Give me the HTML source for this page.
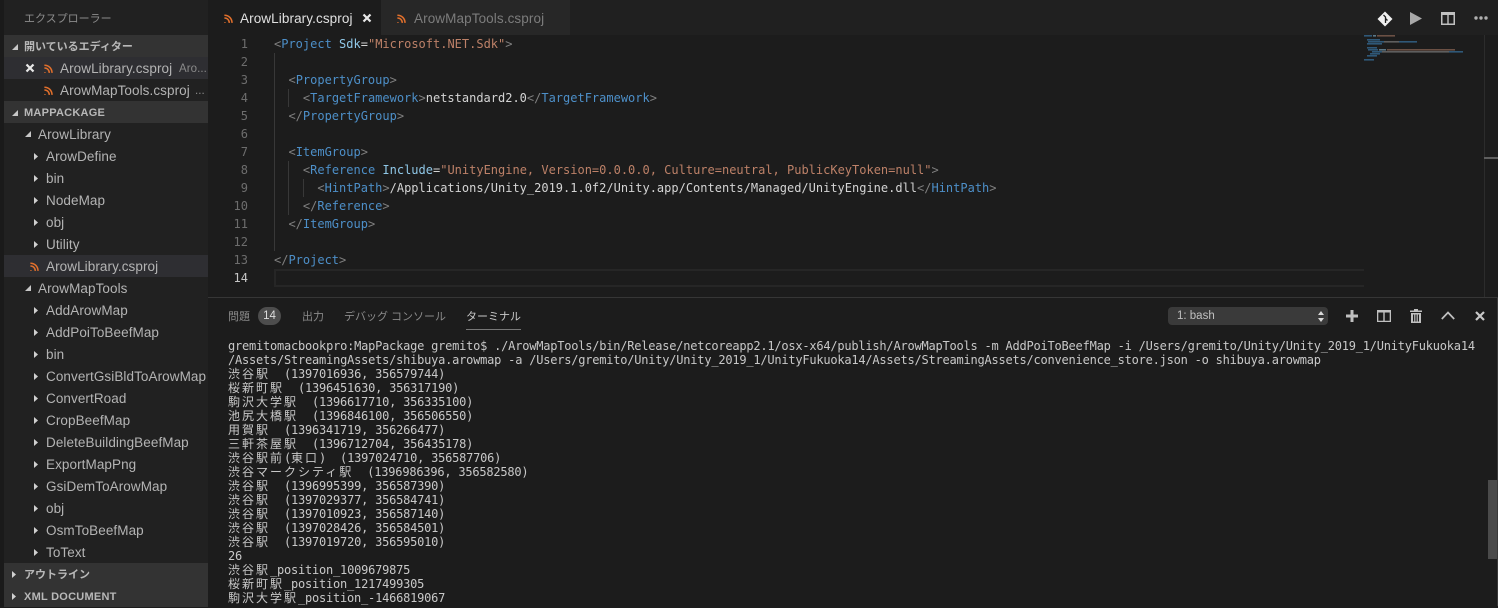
<!DOCTYPE html>
<html><head><meta charset="utf-8"><style>
html,body{margin:0;padding:0;background:#1c1c1c;width:1498px;height:606px;overflow:hidden}
*{box-sizing:border-box}
.a{position:absolute}
#side{left:0;top:0;width:208px;height:606px;background:#212121;font-family:"Liberation Sans","Noto Sans CJK JP",sans-serif;color:#bbb}
#side .strip{left:0;top:0;width:4px;height:606px;background:#1a1a1a}
.r{position:absolute;left:4px;width:204px;height:22px;line-height:22px;font-size:13.5px;letter-spacing:.08px;white-space:nowrap;color:#b4b4b4}
.r span{position:absolute;top:1px}
.h{background:#333;font-size:11px;font-weight:bold;letter-spacing:0;color:#b8b8b8}
.h.l{letter-spacing:.25px}
.r svg{position:absolute}
.ln{position:absolute;left:208px;width:40px;text-align:right;height:18px;line-height:18px;font:12px/18px "DejaVu Sans Mono",monospace;color:#6d6d6d}
.c{position:absolute;left:274px;height:18px;font:12px/18px "DejaVu Sans Mono",monospace;white-space:pre;color:#d4d4d4}
.p{color:#808080}.t{color:#4d8fc8}.k{color:#90c8e8}.s{color:#bd8168}
.g{position:absolute;width:1px;background:#383838}
#term{left:228px;top:339px;font:12px/14px "DejaVu Sans Mono","Noto Sans CJK JP",monospace;letter-spacing:-.22px;color:#c8c8c8;white-space:pre}
#term i{font-style:normal;font-family:"Noto Sans CJK JP",sans-serif;letter-spacing:2px}
.pt{position:absolute;top:308px;font:11px/18px "Liberation Sans","Noto Sans CJK JP",sans-serif;color:#8a8a8a;white-space:nowrap}
.tab{position:absolute;top:0;height:35px;line-height:37px;font-family:"Liberation Sans",sans-serif;font-size:13.5px;letter-spacing:.1px;white-space:nowrap}
</style></head><body>
<svg width="0" height="0" style="position:absolute"><defs>
<g id="rss"><path d="M1 9.2a1.4 1.4 0 1 0 .01 0z" fill="#e2702c"/><path d="M0 4.6c3.7 0 6.4 2.7 6.4 6.4M0 1c5.8 0 10 4.200 10 10" transform="translate(0 -1) scale(.85) translate(.5 1.800)" fill="none" stroke="#e2702c" stroke-width="2"/></g>
<path id="dn" d="M6 0V6H0z" fill="#c8c8c8"/>
<path id="rt" d="M0 0L4 3.500L0 7z" fill="#d0d0d0"/>
</defs></svg>

<div class="a" id="side">
<div class="a strip"></div>
<div class="a" style="left:24px;top:10px;font-size:11px;line-height:18px;color:#8c8c8c">エクスプローラー</div>

<div class="r h" style="top:35px"><svg style="left:8px;top:9px" width="6" height="6"><use href="#dn"/></svg><span style="left:20px">開いているエディター</span></div>
<div class="r" style="top:57px;background:#2e2e32"><svg style="left:21px;top:6px" width="10" height="10" viewBox="0 0 10 10"><path d="M1.500 1.500L8.500 8.500M8.500 1.500L1.500 8.500" stroke="#e8e8e8" stroke-width="2.200"/></svg><svg style="left:40px;top:7px" width="9" height="9" viewBox="0 0 10 10"><use href="#rss"/></svg><span style="left:56px">ArowLibrary.csproj</span><span style="left:175px;font-size:11.5px;color:#8a8a8a">Aro...</span></div>
<div class="r" style="top:79px"><svg style="left:40px;top:7px" width="9" height="9" viewBox="0 0 10 10"><use href="#rss"/></svg><span style="left:56px">ArowMapTools.csproj</span><span style="left:191px;font-size:11.5px;color:#8a8a8a">...</span></div>
<div class="r h l" style="top:101px"><svg style="left:8px;top:9px" width="6" height="6"><use href="#dn"/></svg><span style="left:20px">MAPPACKAGE</span></div>
<div class="r" style="top:123px"><svg style="left:21px;top:8px" width="6" height="6"><use href="#dn"/></svg><span style="left:34px">ArowLibrary</span></div>
<div class="r" style="top:145px"><svg style="left:30px;top:8px" width="4" height="7"><use href="#rt"/></svg><span style="left:42px">ArowDefine</span></div>
<div class="r" style="top:167px"><svg style="left:30px;top:8px" width="4" height="7"><use href="#rt"/></svg><span style="left:42px">bin</span></div>
<div class="r" style="top:189px"><svg style="left:30px;top:8px" width="4" height="7"><use href="#rt"/></svg><span style="left:42px">NodeMap</span></div>
<div class="r" style="top:211px"><svg style="left:30px;top:8px" width="4" height="7"><use href="#rt"/></svg><span style="left:42px">obj</span></div>
<div class="r" style="top:233px"><svg style="left:30px;top:8px" width="4" height="7"><use href="#rt"/></svg><span style="left:42px">Utility</span></div>
<div class="r" style="top:255px;background:#2e2e32"><svg style="left:26px;top:7px" width="9" height="9" viewBox="0 0 10 10"><use href="#rss"/></svg><span style="left:42px">ArowLibrary.csproj</span></div>
<div class="r" style="top:277px"><svg style="left:21px;top:8px" width="6" height="6"><use href="#dn"/></svg><span style="left:34px">ArowMapTools</span></div>
<div class="r" style="top:299px"><svg style="left:30px;top:8px" width="4" height="7"><use href="#rt"/></svg><span style="left:42px">AddArowMap</span></div>
<div class="r" style="top:321px"><svg style="left:30px;top:8px" width="4" height="7"><use href="#rt"/></svg><span style="left:42px">AddPoiToBeefMap</span></div>
<div class="r" style="top:343px"><svg style="left:30px;top:8px" width="4" height="7"><use href="#rt"/></svg><span style="left:42px">bin</span></div>
<div class="r" style="top:365px"><svg style="left:30px;top:8px" width="4" height="7"><use href="#rt"/></svg><span style="left:42px">ConvertGsiBldToArowMap</span></div>
<div class="r" style="top:387px"><svg style="left:30px;top:8px" width="4" height="7"><use href="#rt"/></svg><span style="left:42px">ConvertRoad</span></div>
<div class="r" style="top:409px"><svg style="left:30px;top:8px" width="4" height="7"><use href="#rt"/></svg><span style="left:42px">CropBeefMap</span></div>
<div class="r" style="top:431px"><svg style="left:30px;top:8px" width="4" height="7"><use href="#rt"/></svg><span style="left:42px">DeleteBuildingBeefMap</span></div>
<div class="r" style="top:453px"><svg style="left:30px;top:8px" width="4" height="7"><use href="#rt"/></svg><span style="left:42px">ExportMapPng</span></div>
<div class="r" style="top:475px"><svg style="left:30px;top:8px" width="4" height="7"><use href="#rt"/></svg><span style="left:42px">GsiDemToArowMap</span></div>
<div class="r" style="top:497px"><svg style="left:30px;top:8px" width="4" height="7"><use href="#rt"/></svg><span style="left:42px">obj</span></div>
<div class="r" style="top:519px"><svg style="left:30px;top:8px" width="4" height="7"><use href="#rt"/></svg><span style="left:42px">OsmToBeefMap</span></div>
<div class="r" style="top:541px"><svg style="left:30px;top:8px" width="4" height="7"><use href="#rt"/></svg><span style="left:42px">ToText</span></div>
<div class="r h" style="top:563px"><svg style="left:8px;top:8px" width="4" height="7"><use href="#rt"/></svg><span style="left:20px">アウトライン</span></div>
<div class="r h l" style="top:585px"><svg style="left:8px;top:8px" width="4" height="7"><use href="#rt"/></svg><span style="left:20px">XML DOCUMENT</span></div>
</div>

<!-- tab bar -->
<div class="a" style="left:208px;top:0;width:1290px;height:35px;background:#202020"></div>
<div class="tab" style="left:208px;width:173px;background:#1c1c1c;color:#e0e0e0"><svg class="a" style="left:16px;top:14px" width="9" height="9" viewBox="0 0 10 10"><use href="#rss"/></svg><span class="a" style="left:32px">ArowLibrary.csproj</span><svg class="a" style="left:154px;top:13px" width="10" height="10" viewBox="0 0 10 10"><path d="M1.500 1.500L8.500 8.500M8.500 1.500L1.500 8.500" stroke="#e8e8e8" stroke-width="2.200"/></svg></div>
<div class="tab" style="left:381px;width:189px;background:#272727;color:#7c7c7c"><svg class="a" style="left:16px;top:14px" width="9" height="9" viewBox="0 0 10 10"><use href="#rss"/></svg><span class="a" style="left:33px">ArowMapTools.csproj</span></div>

<!-- top-right icons -->
<svg class="a" style="left:1377px;top:11px" width="16" height="16" viewBox="0 0 16 16"><path d="M8 .5L15.500 8L8 15.500L.5 8z" fill="#f0f0f0"/><path d="M6.500 4L8.500 6V12M8.500 7.500L10.500 9.500" fill="none" stroke="#202020" stroke-width="1.300"/></svg>
<svg class="a" style="left:1410px;top:12px" width="12" height="13" viewBox="0 0 12 13"><path d="M0 0L12 6.500L0 13z" fill="#a8a8a8"/></svg>
<svg class="a" style="left:1441px;top:12px" width="14" height="13" viewBox="0 0 14 13"><path d="M0 0H14V13H0zM1.500 3V11.500H6.300V3zM7.700 3V11.500H12.500V3z" fill="#c0c0c0" fill-rule="evenodd"/></svg>
<svg class="a" style="left:1474px;top:16px" width="14" height="4" viewBox="0 0 14 4"><circle cx="2" cy="2" r="1.700" fill="#b0b0b0"/><circle cx="7" cy="2" r="1.700" fill="#b0b0b0"/><circle cx="12" cy="2" r="1.700" fill="#b0b0b0"/></svg>

<!-- editor -->
<div class="ln" style="top:35px">1</div><div class="ln" style="top:53px">2</div><div class="ln" style="top:71px">3</div><div class="ln" style="top:89px">4</div><div class="ln" style="top:107px">5</div><div class="ln" style="top:125px">6</div><div class="ln" style="top:143px">7</div><div class="ln" style="top:161px">8</div><div class="ln" style="top:179px">9</div><div class="ln" style="top:197px">10</div><div class="ln" style="top:215px">11</div><div class="ln" style="top:233px">12</div><div class="ln" style="top:251px">13</div><div class="ln" style="top:269px;color:#c6c6c6">14</div>

<div class="g" style="left:274px;top:53px;height:198px"></div>
<div class="g" style="left:288px;top:89px;height:18px"></div>
<div class="g" style="left:288px;top:161px;height:54px"></div>
<div class="g" style="left:303px;top:179px;height:18px"></div>
<div class="a" style="left:274px;top:269px;width:1090px;height:18px;border:2px solid #262626;border-right:0"></div>

<div class="c" style="top:35px"><span class="p">&lt;</span><span class="t">Project</span> <span class="k">Sdk</span>=<span class="s">"Microsoft.NET.Sdk"</span><span class="p">&gt;</span></div>
<div class="c" style="top:71px">  <span class="p">&lt;</span><span class="t">PropertyGroup</span><span class="p">&gt;</span></div>
<div class="c" style="top:89px">    <span class="p">&lt;</span><span class="t">TargetFramework</span><span class="p">&gt;</span>netstandard2.0<span class="p">&lt;/</span><span class="t">TargetFramework</span><span class="p">&gt;</span></div>
<div class="c" style="top:107px">  <span class="p">&lt;/</span><span class="t">PropertyGroup</span><span class="p">&gt;</span></div>
<div class="c" style="top:143px">  <span class="p">&lt;</span><span class="t">ItemGroup</span><span class="p">&gt;</span></div>
<div class="c" style="top:161px">    <span class="p">&lt;</span><span class="t">Reference</span> <span class="k">Include</span>=<span class="s">"UnityEngine, Version=0.0.0.0, Culture=neutral, PublicKeyToken=null"</span><span class="p">&gt;</span></div>
<div class="c" style="top:179px">      <span class="p">&lt;</span><span class="t">HintPath</span><span class="p">&gt;</span>/Applications/Unity_2019.1.0f2/Unity.app/Contents/Managed/UnityEngine.dll<span class="p">&lt;/</span><span class="t">HintPath</span><span class="p">&gt;</span></div>
<div class="c" style="top:197px">    <span class="p">&lt;/</span><span class="t">Reference</span><span class="p">&gt;</span></div>
<div class="c" style="top:215px">  <span class="p">&lt;/</span><span class="t">ItemGroup</span><span class="p">&gt;</span></div>
<div class="c" style="top:251px"><span class="p">&lt;/</span><span class="t">Project</span><span class="p">&gt;</span></div>

<!-- minimap -->
<svg class="a" style="left:1364px;top:35px" width="120" height="30">
<g fill="#2f5878"><rect x="0" y="0" width="8" height="1.600"/><rect x="3" y="4" width="13" height="1.600"/><rect x="4" y="6" width="16" height="1.600"/><rect x="35" y="6" width="18" height="1.600"/><rect x="3" y="8" width="15" height="1.600"/><rect x="3" y="12" width="10" height="1.600"/><rect x="4" y="14" width="10" height="1.600"/><rect x="8" y="16" width="10" height="1.600"/><rect x="85" y="16" width="14" height="1.600"/><rect x="6" y="18" width="10" height="1.600"/><rect x="3" y="20" width="10" height="1.600"/><rect x="0" y="24" width="10" height="1.600"/></g>
<g fill="#6b5044"><rect x="13" y="0" width="18" height="1.600"/><rect x="23" y="14" width="68" height="1.600"/></g>
<g fill="#5c7888"><rect x="9" y="0" width="3" height="1.600"/><rect x="15" y="14" width="7" height="1.600"/></g>
<g fill="#5e5e5e"><rect x="20" y="6" width="15" height="1.600"/><rect x="18" y="16" width="67" height="1.600"/></g>
</svg>
<div class="a" style="left:1484px;top:35px;width:1px;height:262px;background:#2c2c2c"></div>
<div class="a" style="left:1484px;top:157px;width:14px;height:2px;background:#5e5e5e"></div>

<!-- panel -->
<div class="a" style="left:208px;top:297px;width:1290px;height:1px;background:#363636"></div>
<div class="pt" style="left:228px">問題</div>
<div class="a" style="left:258px;top:307px;width:23px;height:18px;border-radius:9px;background:#4d4d4d;color:#ddd;font:11.500px/18px 'Liberation Sans',sans-serif;text-align:center">14</div>
<div class="pt" style="left:302px">出力</div>
<div class="pt" style="left:344px">デバッグ コンソール</div>
<div class="pt" style="left:466px;color:#c8c8c8">ターミナル</div>
<div class="a" style="left:466px;top:329px;width:55px;height:1px;background:#777"></div>

<div class="a" style="left:1168px;top:307px;width:160px;height:18px;border-radius:4px;background:#3a3a3a;color:#c0c0c0;font:11.500px/19px 'Liberation Sans',sans-serif;padding-left:9px">1: bash<svg class="a" style="left:150px;top:4px" width="6" height="11" viewBox="0 0 6 11"><path d="M3 0L6 4H0zM3 11L0 7H6z" fill="#d8d8d8"/></svg></div>
<svg class="a" style="left:1346px;top:310px" width="12" height="12" viewBox="0 0 12 12"><path d="M4.500 0H7.500V4.500H12V7.500H7.500V12H4.500V7.500H0V4.500H4.500z" fill="#c0c0c0"/></svg>
<svg class="a" style="left:1377px;top:310px" width="14" height="12" viewBox="0 0 14 12"><path d="M0 0H14V12H0zM1.300 2.500V10.700H6.300V2.500zM7.700 2.500V10.700H12.700V2.500z" fill="#c0c0c0" fill-rule="evenodd"/></svg>
<svg class="a" style="left:1410px;top:309px" width="12" height="14" viewBox="0 0 12 14"><path d="M4 0H8V1.500H12V3H0V1.500H4zM1 4H11V14H1zM3 5.500V12.500H4.200V5.500zM5.400 5.500V12.500H6.600V5.500zM7.800 5.500V12.500H9V5.500z" fill="#c0c0c0" fill-rule="evenodd"/></svg>
<svg class="a" style="left:1441px;top:311px" width="14" height="9" viewBox="0 0 14 9"><path d="M.8 8L7 1.500L13.200 8" fill="none" stroke="#c0c0c0" stroke-width="1.700"/></svg>
<svg class="a" style="left:1475px;top:311px" width="10" height="10" viewBox="0 0 10 10"><path d="M1 1L9 9M9 1L1 9" stroke="#c8c8c8" stroke-width="2.200"/></svg>

<div class="a" id="term">gremitomacbookpro:MapPackage gremito$ ./ArowMapTools/bin/Release/netcoreapp2.1/osx-x64/publish/ArowMapTools -m AddPoiToBeefMap -i /Users/gremito/Unity/Unity_2019_1/UnityFukuoka14
/Assets/StreamingAssets/shibuya.arowmap -a /Users/gremito/Unity/Unity_2019_1/UnityFukuoka14/Assets/StreamingAssets/convenience_store.json -o shibuya.arowmap
<i>渋谷駅</i>  (1397016936, 356579744)
<i>桜新町駅</i>  (1396451630, 356317190)
<i>駒沢大学駅</i>  (1396617710, 356335100)
<i>池尻大橋駅</i>  (1396846100, 356506550)
<i>用賀駅</i>  (1396341719, 356266477)
<i>三軒茶屋駅</i>  (1396712704, 356435178)
<i>渋谷駅前</i>(<i>東口</i>)  (1397024710, 356587706)
<i>渋谷マークシティ駅</i>  (1396986396, 356582580)
<i>渋谷駅</i>  (1396995399, 356587390)
<i>渋谷駅</i>  (1397029377, 356584741)
<i>渋谷駅</i>  (1397010923, 356587140)
<i>渋谷駅</i>  (1397028426, 356584501)
<i>渋谷駅</i>  (1397019720, 356595010)
26
<i>渋谷駅</i>_position_1009679875
<i>桜新町駅</i>_position_1217499305
<i>駒沢大学駅</i>_position_-1466819067</div>

<div class="a" style="left:1488px;top:480px;width:10px;height:79px;background:#4a4a4a"></div>
<div class="a" style="left:1497px;top:298px;width:1px;height:308px;background:#3a3a3a"></div>
</body></html>
